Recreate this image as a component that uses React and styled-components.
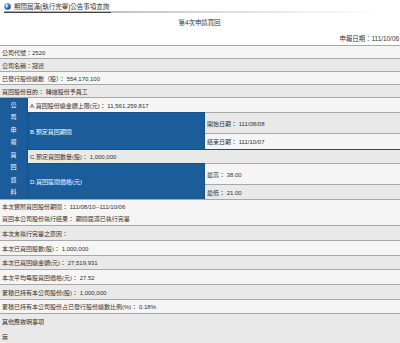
import React from "react";
import styled, { createGlobalStyle } from "styled-components";

const Global = createGlobalStyle`
    html, body {
        margin: 0;
        padding: 0;
        background: #fff;
    }
    body {
        font-family: "Liberation Sans", "Noto Sans CJK TC", sans-serif;
        color: #333;
    }
`;

const Page = styled.div`
    width: 400px;
    height: 343px;
    overflow: hidden;
    font-size: 6px;
`;

const TitleBar = styled.div`
    display: flex;
    align-items: flex-end;
    height: 13px;
    margin: 0 18px 0 4px;
    background: linear-gradient(to right, #a5a5a5, #dedede 60%, #fff) bottom / 100% 2px no-repeat;
`;

const Title = styled.h1`
    display: flex;
    align-items: center;
    gap: 3px;
    margin: 0;
    height: 12px;
    padding-right: 2px;
    border-bottom: 1px solid #444;
    font-size: 6.5px;
    font-weight: normal;
    color: #333;
`;

const Sub = styled.div`
    text-align: ${(p) => p.$align};
    height: ${(p) => p.$h}px;
    line-height: ${(p) => p.$h}px;
    font-size: 6.4px;
    padding-right: 1px;
`;

const Row = styled.div`
    display: flex;
    align-items: ${(p) => (p.$tall ? "flex-start" : "center")};
    flex-direction: ${(p) => (p.$tall ? "column" : "row")};
    justify-content: ${(p) => (p.$tall ? "space-between" : "flex-start")};
    height: ${(p) => p.$h || 13}px;
    box-sizing: border-box;
    padding: ${(p) => (p.$tall ? "3px 2px 2px" : "0 2px")};
    background: ${(p) => (p.$dark ? "#e9e9e9" : "#f5f5f5")};
    border-top: ${(p) => (p.$noline ? "none" : "1px solid #a8a8a8")};
    white-space: nowrap;
`;

const Report = styled.div`
    display: grid;
    grid-template-columns: 27px 176px 1fr;
    grid-template-rows: 14px 20px 15px 13px 20px 14px;
    gap: 1px;
    background: #174f86;
    border-top: 1px solid #a8a8a8;
`;

const Side = styled.div`
    grid-row: 1 / 7;
    display: flex;
    flex-direction: column;
    align-items: center;
    justify-content: center;
    background: #1b5c9a;
    color: #fff;
    font-size: 6px;
    line-height: 12.5px;
`;

const Wide = styled.div`
    grid-column: 2 / 4;
    display: flex;
    align-items: center;
    padding: 0 2px;
    background: ${(p) => (p.$dark ? "#e9e9e9" : "#f5f5f5")};
`;

const Label = styled.div`
    grid-row: span 2;
    display: flex;
    align-items: center;
    padding: 0 2px;
    background: #1b5c9a;
    color: #fff;
`;

const Cell = styled.div`
    display: flex;
    align-items: center;
    padding: 0 2px;
    background: ${(p) => (p.$dark ? "#e9e9e9" : "#f5f5f5")};
    border-top: 1px solid #a8a8a8;
    margin-top: -1px;
`;

function Globe() {
    return (
        <svg width="7" height="7" viewBox="0 0 14 14">
            <defs>
                <radialGradient id="g" cx="0.35" cy="0.3" r="0.8">
                    <stop offset="0" stopColor="#cfe6ff" />
                    <stop offset="0.45" stopColor="#2f7fd0" />
                    <stop offset="1" stopColor="#0b3f86" />
                </radialGradient>
            </defs>
            <circle cx="7" cy="7" r="6.5" fill="url(#g)" />
            <path d="M4 5 L7 4 L8 6 L6 8 L7 10 L5 11 Z" fill="#fff" opacity="0.75" />
        </svg>
    );
}

const side = ["公", "司", "申", "報", "買", "回", "資", "料"];

export default function App() {
    return (
        <Page>
            <Global />
            <TitleBar>
                <Title>
                    <Globe />
                    期間屆滿(執行完畢)公告事項查詢
                </Title>
            </TitleBar>
            <Sub $align="center" $h={20}>第4次申請買回</Sub>
            <Sub $align="right" $h={12}>申報日期：111/10/06</Sub>

            <Row>公司代號：2520</Row>
            <Row $dark>公司名稱：冠德</Row>
            <Row>已發行股份總數（股）： 554,170,100</Row>
            <Row $dark>買回股份目的： 轉讓股份予員工</Row>

            <Report>
                <Side>
                    {side.map((c) => (
                        <span key={c}>{c}</span>
                    ))}
                </Side>
                <Wide>A.買回股份總金額上限(元)： 11,561,259,817</Wide>
                <Label>B.預定買回期間</Label>
                <Cell $dark>開始日期： 111/08/08</Cell>
                <Cell>結束日期： 111/10/07</Cell>
                <Wide $dark>C.預定買回數量(股)： 1,000,000</Wide>
                <Label>D.買回區間價格(元)</Label>
                <Cell>最高： 38.00</Cell>
                <Cell $dark>最低： 21.00</Cell>
            </Report>

            <Row>本次實際買回股份期間： 111/08/10--111/10/06</Row>
            <Row $noline>買回本公司股份執行結果： 期間屆滿已執行完畢</Row>
            <Row $dark $h={15}>本次未執行完畢之原因：</Row>
            <Row $h={15}>本次已買回股數(股)： 1,000,000</Row>
            <Row $dark $h={14}>本次已買回總金額(元)： 27,519,931</Row>
            <Row $h={15}>本次平均每股買回價格(元)： 27.52</Row>
            <Row $dark $h={15}>累積已持有本公司股份(股)： 1,000,000</Row>
            <Row $h={14}>累積已持有本公司股份占已發行股份總數比例(%)： 0.18%</Row>
            <Row $dark $tall $h={30}>
                <span>其他應敘明事項</span>
                <span>無</span>
            </Row>
        </Page>
    );
}
